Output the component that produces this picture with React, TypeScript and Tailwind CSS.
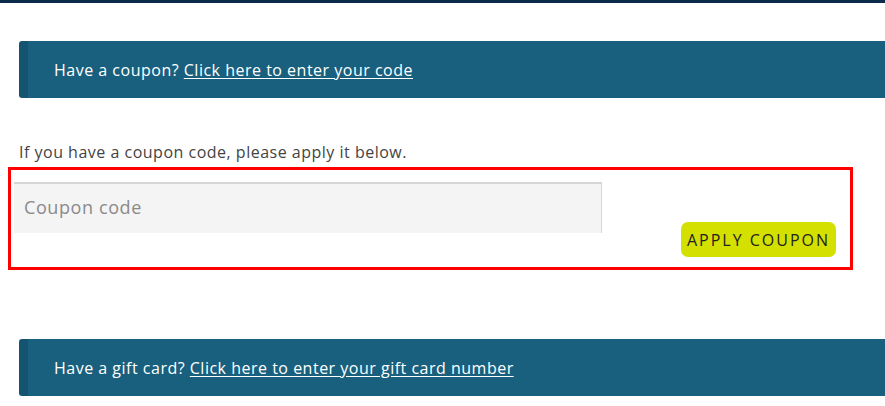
import { useState } from 'react'

function Notice({ lead, link }: { lead: string; link: string }) {
  return (
    <div className="w-[880px] h-[57px] flex items-center bg-[#19607f] border-l-[9px] border-[#145470] rounded-l-[3px] pl-[26px] text-white text-[16px] tracking-[0.5px]">
      <span>
        {lead} <a href="#" className="underline underline-offset-2">{link}</a>
      </span>
    </div>
  )
}

export default function App() {
  const [code, setCode] = useState('')

  return (
    <main className="w-[885px] h-[406px] overflow-hidden bg-white font-['Open_Sans',sans-serif]">
      <div className="h-[3px] bg-[#0c2b4b]" />
      <div className="pl-[19px] pt-[38px]">
        <Notice lead="Have a coupon?" link="Click here to enter your code" />
      </div>
      <p className="pl-[19px] mt-[43px] leading-[22px] text-[16px] tracking-[0.5px] text-[#444]">If you have a coupon code, please apply it below.</p>
      <form onSubmit={e => e.preventDefault()}
        className="ml-[8px] mt-[4px] w-[845px] h-[103px] border-[3px] border-[#ff0000] pl-[3px] pr-[14px] pt-[12px] flex justify-between">
        <input value={code} onChange={e => setCode(e.target.value)} placeholder="Coupon code"
          className="w-[588px] h-[51px] bg-[#f4f4f4] border-t-2 border-r border-[#d6d6d6] px-[10px] pb-[4px] text-[18px] tracking-[0.6px] text-[#444] placeholder:text-[#8a8a8a] focus:outline-none" />
        <button type="submit"
          className="self-start mt-[40px] h-[35px] w-[155px] rounded-[7px] bg-[#d4e000] text-[#222] text-[16px] font-medium tracking-[2px]">
          APPLY COUPON
        </button>
      </form>
      <div className="pl-[19px] mt-[69px]">
        <Notice lead="Have a gift card?" link="Click here to enter your gift card number" />
      </div>
    </main>
  )
}
